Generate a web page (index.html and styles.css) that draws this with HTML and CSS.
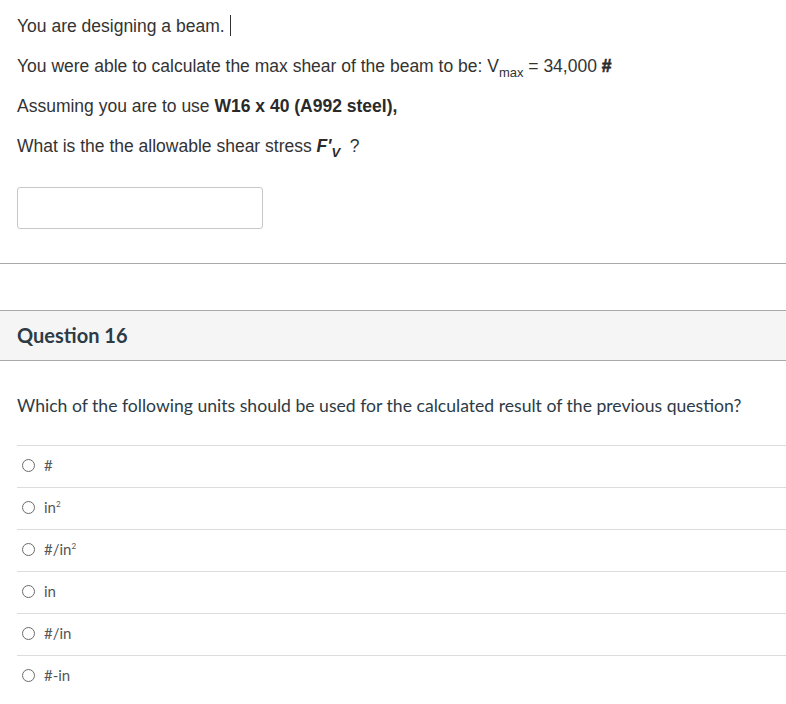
FILE: index.html
```html
<!DOCTYPE html>
<html>
<head>
<meta charset="utf-8">
<link rel="stylesheet" href="styles.css">
</head>
<body>
<div class="q15">
  <p class="para">You are designing a beam.<span class="caret"></span></p>
  <p class="para">You were able to calculate the max shear of the beam to be: V<sub>max</sub> = 34,000 <b class="hash">#</b></p>
  <p class="para">Assuming you are to use <b>W16 x 40 (A992 steel),</b></p>
  <p class="para">What is the the allowable shear stress <b><i>F'<sub>V</sub></i></b> &nbsp;?</p>
  <div class="answer-box"></div>
</div>
<hr class="divider">
<div class="q-header">Question 16</div>
<div class="q16">
  <p class="q-text">Which of the following units should be used for the calculated result of the previous question?</p>
  <ul class="options">
    <li class="option"><span class="radio"></span><span>#</span></li>
    <li class="option"><span class="radio"></span><span>in<sup>2</sup></span></li>
    <li class="option"><span class="radio"></span><span>#/in<sup>2</sup></span></li>
    <li class="option"><span class="radio"></span><span>in</span></li>
    <li class="option"><span class="radio"></span><span>#/in</span></li>
    <li class="option"><span class="radio"></span><span>#-in</span></li>
  </ul>
</div>
</body>
</html>
```
FILE: styles.css
```css
html, body {
  margin: 0;
  padding: 0;
  background: #fff;
}
body {
  width: 786px;
  overflow: hidden;
}
.q15 {
  padding: 14px 0 0 17px;
}
.para {
  margin: 0 0 16px 0;
  font-family: "Liberation Sans", Arial, sans-serif;
  font-size: 17.5px;
  line-height: 24px;
  color: #333;
}
.para b {
  color: #2a2a2a;
}
.para .hash {
  -webkit-text-stroke: 0.6px #2a2a2a;
}
.para sub {
  font-size: 13px;
  vertical-align: -5px;
  line-height: 0;
}
.caret {
  display: inline-block;
  width: 1px;
  height: 21px;
  background: #333;
  margin-left: 5px;
  vertical-align: -4px;
}
.answer-box {
  margin-top: 29px;
  width: 244px;
  height: 40px;
  border: 1px solid #c8c8c8;
  border-radius: 3px;
}
.divider {
  margin: 34px 0 0 0;
  border: 0;
  border-top: 1px solid #a8a8a8;
  height: 0;
}
.q-header {
  margin-top: 46px;
  height: 49px;
  border-top: 1px solid #a8a8a8;
  border-bottom: 1px solid #a8a8a8;
  background: #f5f5f5;
  font-family: Lato, sans-serif;
  font-weight: bold;
  font-size: 20px;
  line-height: 49px;
  color: #2d3b45;
  padding-left: 17px;
}
.q16 {
  padding-left: 17px;
}
.q-text {
  margin: 32px 0 0 0;
  font-family: Lato, sans-serif;
  font-size: 17.6px;
  line-height: 26px;
  color: #2d3b45;
}
.options {
  list-style: none;
  margin: 26px 0 0 0;
  padding: 0;
}
.option {
  display: flex;
  align-items: center;
  height: 38px;
  padding-bottom: 3px;
  border-top: 1px solid #dcdcdc;
  font-family: Lato, sans-serif;
  font-size: 15px;
  color: #555;
}
.option sup {
  font-size: 8px;
  vertical-align: 6px;
  line-height: 0;
}
.radio {
  width: 11px;
  height: 11px;
  border: 1px solid #6b6b6b;
  border-radius: 50%;
  margin: 0 9px 0 5px;
  flex: none;
}
```
